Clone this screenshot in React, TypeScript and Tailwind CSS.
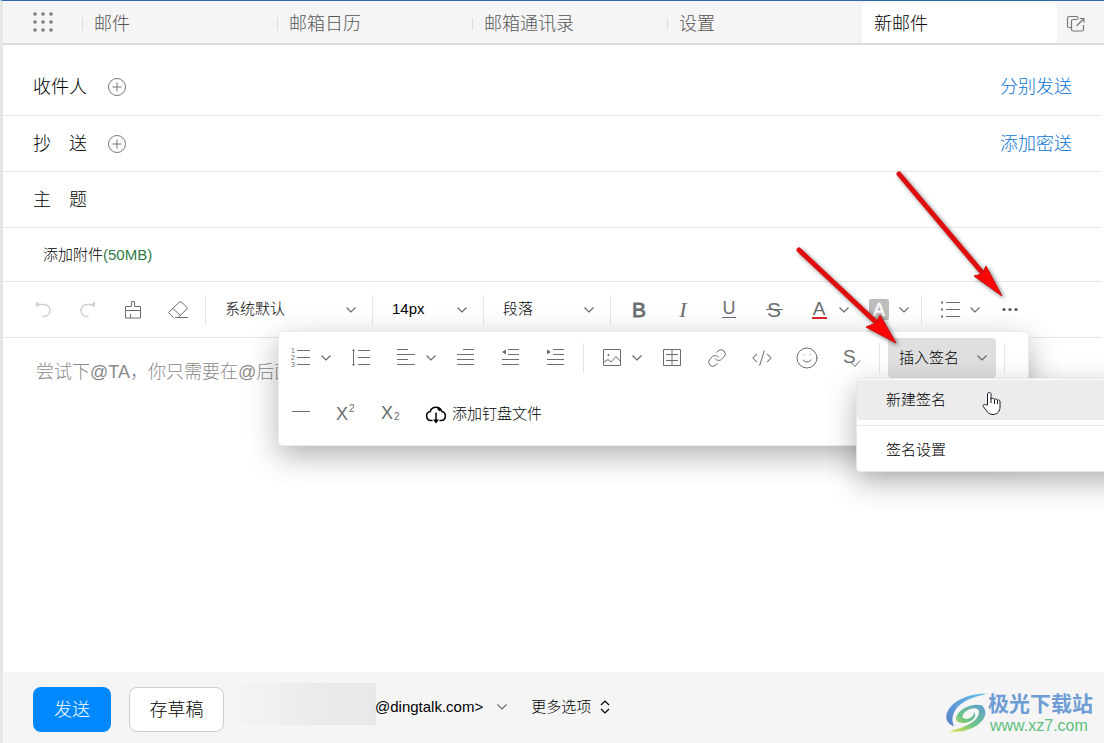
import { ReactNode, useState } from 'react'
import clsx from 'clsx'
import { CodeXml, Link, Smile } from 'lucide-react'

const tabs = ['邮件', '邮箱日历', '邮箱通讯录', '设置', '新邮件']

const Icon = ({
    children,
    className,
}: {
    children: ReactNode
    className?: string
}) => (
    <svg
        width="24"
        height="24"
        viewBox="0 0 24 24"
        fill="none"
        stroke="currentColor"
        aria-hidden="true"
        className={clsx('shrink-0', className)}
    >
        {children}
    </svg>
)

const Chevron = ({ className }: { className?: string }) => (
    <svg
        width="10"
        height="6"
        viewBox="0 0 10 6"
        fill="none"
        stroke="currentColor"
        aria-hidden="true"
        className={clsx('shrink-0 text-[#666]', className)}
    >
        <path d="M.5.5 5 5 9.5.5" strokeWidth="1.100" />
    </svg>
)

const ToolButton = ({
    label,
    dropdown,
    className,
    children,
}: {
    label: string
    dropdown?: boolean
    className?: string
    children: ReactNode
}) => (
    <button
        type="button"
        aria-label={label}
        className={clsx(
            'flex h-10 shrink-0 items-center gap-2',
            dropdown ? 'w-[60px]' : 'w-[45px]',
            className || 'pl-[11px] text-[#6b6e70]'
        )}
    >
        {children}
        {dropdown && <Chevron />}
    </button>
)

const Separator = () => (
    <span className="mx-[5px] h-[30px] w-px shrink-0 bg-[#e6e6e6]" />
)

const ToolSelect = ({
    label,
    value,
    className,
}: {
    label: string
    value: string
    className: string
}) => (
    <div className={clsx('relative h-10 shrink-0', className)}>
        <select
            aria-label={label}
            className="h-full w-full appearance-none bg-transparent pl-[14px] text-[15px] font-light text-black outline-none"
        >
            <option>{value}</option>
        </select>
        <Chevron className="pointer-events-none absolute right-[11px] top-[17px]" />
    </div>
)

const AddButton = ({ label }: { label: string }) => (
    <button type="button" aria-label={label} className="text-[#777]">
        <svg
            width="18"
            height="18"
            viewBox="0 0 18 18"
            fill="none"
            stroke="currentColor"
        >
            <circle cx="9" cy="9" r="8.5" />
            <path d="M9 4.5v9M4.5 9h9" />
        </svg>
    </button>
)

const Field = ({
    id,
    label,
    addLabel,
    action,
    className,
}: {
    id: string
    label: string
    addLabel?: string
    action?: string
    className: string
}) => (
    <div
        className={clsx(
            'mr-[3px] flex items-center border-b border-[#e5e5e5] pl-[30px] pr-[29px] text-lg font-light',
            className
        )}
    >
        <label htmlFor={id} className="mr-[21px] text-black">
            {label}
        </label>
        {addLabel && <AddButton label={addLabel} />}
        <input
            id={id}
            type="text"
            className="mx-3 min-w-0 flex-1 bg-transparent outline-none"
        />
        {action && (
            <a href="#" className="text-[#0a74d4]">
                {action}
            </a>
        )}
    </div>
)

const SignatureMenu = () => (
    <div
        role="menu"
        className="absolute left-[577px] top-[46px] w-[280px] rounded border border-[#e8e8e8] bg-white pt-px text-[15px] font-light text-black shadow-[0_10px_30px_rgba(0,0,0,0.3)]"
    >
        <button
            type="button"
            role="menuitem"
            className="block h-10 w-full rounded bg-[#ececec] pl-[29px] text-left"
        >
            新建签名
        </button>
        <div className="mt-[5px] h-px bg-[#e5e5e5]" />
        <button
            type="button"
            role="menuitem"
            className="block h-[45px] w-full pl-[29px] pt-1 text-left"
        >
            签名设置
        </button>
        <svg
            width="20"
            height="24"
            viewBox="0 0 20 24"
            fill="#fff"
            stroke="#1b1b2b"
            strokeLinejoin="round"
            aria-hidden="true"
            className="absolute left-[125px] top-[12px]"
        >
            <path d="M5.5 14V2.5a2 2 0 0 1 3.500 0V8c.5-1 3-1 3.500.5 1-1 2.800-.5 3 .8 1-.8 2.500-.2 2.500 1.200V16c0 4-2.500 7.500-7 7.500-3.500 0-5.500-1.700-7-4.500L1.300 15.500c-.8-1.600.9-2.800 2.200-1.700z" />
            <path d="M9 7v5M12.500 8.500V13M15.500 9.500V13" />
        </svg>
    </div>
)

const MorePanel = () => (
    <div className="absolute left-[275px] top-[49px] z-10 w-[751px] rounded border border-[#ececec] bg-white pb-[11px] pt-[6px] shadow-[0_10px_30px_rgba(0,0,0,0.3)]">
        <div className="-ml-px flex items-center">
            <ToolButton label="有序列表" dropdown>
                <Icon>
                    <path d="M8 4.500h13M8 11.500h13M8 18.500h13" />
                    <g
                        fill="currentColor"
                        stroke="none"
                        fontSize="7"
                        fontFamily="Liberation Sans"
                    >
                        <text x="2" y="7">
                            1
                        </text>
                        <text x="2" y="14">
                            2
                        </text>
                        <text x="2" y="21">
                            3
                        </text>
                    </g>
                </Icon>
            </ToolButton>
            <ToolButton label="行高">
                <Icon>
                    <path d="M4.500 3.500v16M3.500 5l1-1.500 1 1.500M3.500 18l1 1.500 1-1.500M9 4.500h12M9 11.500h12M9 18.500h12" />
                </Icon>
            </ToolButton>
            <ToolButton label="对齐" dropdown>
                <Icon>
                    <path d="M3 3.500h11M3 8.500h18M3 13.500h11M3 18.500h18" />
                </Icon>
            </ToolButton>
            <ToolButton label="首行缩进">
                <Icon>
                    <path d="M9 3.500h11M3 8.500h17M3 13.500h17M3 18.500h17" />
                </Icon>
            </ToolButton>
            <ToolButton label="减少缩进">
                <Icon>
                    <path d="M9 3.500h11M9 8.500h11M3 13.500h17M3 18.500h17" />
                    <path d="M7 3.500v5L3 6z" fill="currentColor" stroke="none" />
                </Icon>
            </ToolButton>
            <ToolButton label="增加缩进">
                <Icon>
                    <path d="M9 3.500h11M9 8.500h11M3 13.500h17M3 18.500h17" />
                    <path d="M3 3.500v5L7 6z" fill="currentColor" stroke="none" />
                </Icon>
            </ToolButton>
            <Separator />
            <ToolButton label="图片" dropdown>
                <Icon>
                    <path d="M3.500 3.500h17v16h-17z" />
                    <path d="m4 16 4-2.500 3 2.500 5-5.500 4.500 5" />
                    <circle cx="8.500" cy="9" r="1" fill="currentColor" stroke="none" />
                </Icon>
            </ToolButton>
            <ToolButton label="表格">
                <Icon>
                    <path d="M3.500 3.500h17v16h-17zM12 4v15M6 8.500h12M6 14.500h12" />
                </Icon>
            </ToolButton>
            <ToolButton label="链接" className="pl-[13px] text-[#6b6e70]">
                <Link size={20} strokeWidth={1.2} />
            </ToolButton>
            <ToolButton label="代码" className="pl-[12px] text-[#6b6e70]">
                <CodeXml size={22} strokeWidth={1.1} />
            </ToolButton>
            <ToolButton label="表情">
                <Smile size={24} strokeWidth={1} />
            </ToolButton>
            <ToolButton label="拼写检查">
                <Icon>
                    <text
                        x="3"
                        y="17"
                        fontSize="19"
                        fontFamily="Liberation Sans"
                        fill="currentColor"
                        stroke="none"
                    >
                        S
                    </text>
                    <path d="m11.500 17 3.500 3.500 5-6" />
                </Icon>
            </ToolButton>
            <Separator />
            <button
                type="button"
                aria-haspopup="menu"
                className="mx-[3px] flex h-10 w-[108px] items-center rounded-sm bg-[#dfdfdf] pl-[11px] text-[15px] font-light text-black"
            >
                插入签名
                <Chevron className="ml-[18px]" />
            </button>
            <Separator />
        </div>
        <div className="-ml-px mt-4 flex items-center">
            <ToolButton label="分割线">
                <Icon>
                    <path d="M3 9.500h18" />
                </Icon>
            </ToolButton>
            <ToolButton label="上标">
                <Icon>
                    <g
                        fill="currentColor"
                        stroke="none"
                        fontFamily="Liberation Sans"
                    >
                        <text x="2" y="18" fontSize="18">
                            X
                        </text>
                        <text x="15" y="10" fontSize="10">
                            2
                        </text>
                    </g>
                </Icon>
            </ToolButton>
            <ToolButton label="下标">
                <Icon>
                    <g
                        fill="currentColor"
                        stroke="none"
                        fontFamily="Liberation Sans"
                    >
                        <text x="2" y="17" fontSize="18">
                            X
                        </text>
                        <text x="15" y="18" fontSize="10">
                            2
                        </text>
                    </g>
                </Icon>
            </ToolButton>
            <button
                type="button"
                className="flex h-10 items-center gap-1 pl-[11px] text-[15px] font-light text-black"
            >
                <Icon>
                    <path
                        d="M8.500 18.500H7a4.500 4.500 0 0 1-.8-8.900 6 6 0 0 1 11.600 0 4.500 4.500 0 0 1-.8 8.900h-1.500M12 10.500v9.500M13.500 6.500a4.500 4.500 0 0 1 2.300 2.500"
                        strokeWidth="1.500"
                    />
                    <path d="M9 17.500h6L12 21.500z" fill="currentColor" stroke="none" />
                </Icon>
                添加钉盘文件
            </button>
        </div>
        <SignatureMenu />
    </div>
)

const Toolbar = () => (
    <div className="relative mr-[3px] flex h-14 items-center border-b border-[#e5e5e5] pl-[17px]">
        <ToolButton label="撤销" className="pl-[11px] text-[#d0d0d0]">
            <Icon>
                <path
                    d="M6 6.500h7a5.500 5.500 0 0 1 0 12H11.500"
                    strokeWidth="1.500"
                />
                <path d="M5 3.500v5.500L10 7z" fill="currentColor" stroke="none" />
            </Icon>
        </ToolButton>
        <ToolButton label="重做" className="pl-[11px] text-[#d0d0d0]">
            <Icon>
                <path
                    d="M18 6.500h-7a5.500 5.500 0 0 0 0 12H12.500"
                    strokeWidth="1.500"
                />
                <path d="M19 3.500v5.500L14 7z" fill="currentColor" stroke="none" />
            </Icon>
        </ToolButton>
        <ToolButton label="格式刷">
            <Icon>
                <path d="M10.500 8.500v-5h3v5h6v4h-15v-4zM4.500 12.500v7.500h15v-7.500M9.500 20v-4" />
            </Icon>
        </ToolButton>
        <ToolButton label="清除格式">
            <Icon>
                <path d="M9 19.500h13M7.500 19.500 2.500 14.500l11-10.500h2l5.500 5.500v1.500l-9 8.500M7 10.500l7.500 7" />
            </Icon>
        </ToolButton>
        <Separator />
        <ToolSelect label="字体" value="系统默认" className="w-[156px]" />
        <Separator />
        <ToolSelect label="字号" value="14px" className="w-[100px]" />
        <Separator />
        <ToolSelect label="段落格式" value="段落" className="w-[116px]" />
        <Separator />
        <ToolButton label="加粗">
            <Icon>
                <text
                    x="12"
                    y="19"
                    textAnchor="middle"
                    fontSize="21"
                    fontFamily="Liberation Sans"
                    fill="currentColor"
                    strokeWidth=".8"
                >
                    B
                </text>
            </Icon>
        </ToolButton>
        <ToolButton label="斜体">
            <Icon>
                <text
                    x="11"
                    y="19"
                    textAnchor="middle"
                    fontSize="22"
                    fontStyle="italic"
                    fontFamily="Liberation Serif"
                    fill="currentColor"
                    stroke="none"
                >
                    I
                </text>
            </Icon>
        </ToolButton>
        <ToolButton label="下划线">
            <Icon>
                <text
                    x="12"
                    y="16"
                    textAnchor="middle"
                    fontSize="18"
                    fontFamily="Liberation Sans"
                    fill="currentColor"
                    stroke="none"
                >
                    U
                </text>
                <path d="M5 19.500h14" />
            </Icon>
        </ToolButton>
        <ToolButton label="删除线">
            <Icon>
                <text
                    x="12"
                    y="19"
                    textAnchor="middle"
                    fontSize="21"
                    fontFamily="Liberation Sans"
                    fill="currentColor"
                    stroke="none"
                >
                    S
                </text>
                <path d="M4 11.500h17" />
            </Icon>
        </ToolButton>
        <ToolButton label="文字颜色" dropdown>
            <Icon>
                <text
                    x="12"
                    y="17"
                    textAnchor="middle"
                    fontSize="19"
                    fontFamily="Liberation Sans"
                    fill="currentColor"
                    stroke="none"
                >
                    A
                </text>
                <path d="M5 20h15" stroke="#d9252b" strokeWidth="2" />
            </Icon>
        </ToolButton>
        <ToolButton label="背景颜色" dropdown>
            <Icon>
                <rect
                    x="2"
                    y="1"
                    width="20"
                    height="21"
                    rx="2"
                    fill="#bdbdbd"
                    stroke="none"
                />
                <text
                    x="12"
                    y="18"
                    textAnchor="middle"
                    fontSize="18"
                    fontFamily="Liberation Sans"
                    fill="#fff"
                    stroke="#fff"
                    strokeWidth=".4"
                >
                    A
                </text>
            </Icon>
        </ToolButton>
        <Separator />
        <ToolButton label="无序列表" dropdown>
            <Icon>
                <path d="M8 4.500h14M8 11.500h14M8 18.500h14" />
                <path d="M3 4.500h2M3 11.500h2M3 18.500h2" strokeWidth="2" />
            </Icon>
        </ToolButton>
        <ToolButton label="更多">
            <Icon>
                <g fill="#555" stroke="none">
                    <circle cx="6" cy="11.500" r="1.600" />
                    <circle cx="12" cy="11.500" r="1.600" />
                    <circle cx="18" cy="11.500" r="1.600" />
                </g>
            </Icon>
        </ToolButton>
        <MorePanel />
    </div>
)

const Header = () => {
    const [active, setActive] = useState('新邮件')

    return (
        <header className="flex h-11 items-stretch border-b-2 border-[#dcdcdc] bg-[#f5f5f5]">
            <button
                type="button"
                aria-label="应用"
                className="w-[79px] shrink-0 pl-[30px] text-[#777]"
            >
                <svg width="20" height="20" viewBox="0 0 20 20" fill="currentColor">
                    {[2, 10, 18].map((y) =>
                        [2, 10, 18].map((x) => (
                            <rect
                                key={`${x}-${y}`}
                                x={x - 1.5}
                                y={y - 1.5}
                                width="3"
                                height="3"
                                rx=".5"
                            />
                        ))
                    )}
                </svg>
            </button>
            <nav className="flex min-w-0 flex-1">
                {tabs.map((tab) => (
                    <button
                        key={tab}
                        type="button"
                        onClick={() => setActive(tab)}
                        className={clsx(
                            'flex flex-1 items-center gap-[11px] pt-[3px] text-lg font-light',
                            tab === active
                                ? 'rounded-t-md bg-white text-black'
                                : 'text-[#555]'
                        )}
                    >
                        <span
                            className={clsx(
                                'h-3 w-px',
                                tab === active ? 'bg-transparent' : 'bg-[#dcdcdc]'
                            )}
                        />
                        {tab}
                    </button>
                ))}
            </nav>
            <button
                type="button"
                aria-label="新窗口打开"
                className="w-[47px] shrink-0 pl-2 pt-1 text-[#777]"
            >
                <svg
                    width="22"
                    height="20"
                    viewBox="0 0 22 20"
                    fill="none"
                    stroke="currentColor"
                    strokeWidth="1.200"
                    strokeLinejoin="round"
                >
                    <path d="M6.500 13.500H4A1.500 1.500 0 0 1 2.500 12V4A1.500 1.500 0 0 1 4 2.500h7.500A1.500 1.500 0 0 1 13 4v1.500" />
                    <path d="M12 5.500H8A1.500 1.500 0 0 0 6.500 7v8.500A1.500 1.500 0 0 0 8 17h9a1.500 1.500 0 0 0 1.500-1.500V11M11.500 12 19 4.500M15 4.500h4V8.500" />
                </svg>
            </button>
        </header>
    )
}

const Watermark = () => (
    <div className="ml-auto mr-[11px] mt-[9px] flex shrink-0">
        <svg width="43" height="42" viewBox="0 0 44 44" aria-hidden="true">
            <defs>
                <linearGradient id="swirl-blue" x1="0" y1="1" x2="1" y2="0">
                    <stop offset="0" stopColor="#5b7fc9" />
                    <stop offset="1" stopColor="#63c3ea" />
                </linearGradient>
                <linearGradient id="swirl-green" x1="0" y1="1" x2="1" y2="0">
                    <stop offset="0" stopColor="#f3e14f" />
                    <stop offset=".45" stopColor="#6cc684" />
                    <stop offset="1" stopColor="#5f9ed6" />
                </linearGradient>
            </defs>
            <path
                d="M43 2C25 1 4 10 1 24c-1 5 2 10 8 12-4-8-1-19 11-26C28 5 36 4 43 2Z"
                fill="url(#swirl-blue)"
            />
            <path
                d="M38 14C28 11 13 18 11 27c-1 6 9 7 16 3 4-2 5-6 3-9 0 6-8 9-12 6-1-5 6-10 13-10 5 1 5 5 2 10-5 7-17 11-29 14 14 3 32-4 37-15 2-5 0-9-3-12Z"
                fill="url(#swirl-green)"
            />
        </svg>
        <div className="flex flex-col whitespace-nowrap">
            <span className="text-[21px] font-bold leading-6 text-[#6d9dd4]">
                极光下载站
            </span>
            <span className="pl-[2px] text-base font-medium leading-5 text-[#5fbf7e]">
                www.xz7.com
            </span>
        </div>
    </div>
)

const Footer = () => (
    <footer className="flex h-[71px] items-start bg-[#f5f5f5] pl-[30px] pt-[11px]">
        <button
            type="submit"
            className="mt-1 h-[45px] w-[78px] shrink-0 rounded-lg bg-[#0089ff] text-lg font-light text-white"
        >
            发送
        </button>
        <button
            type="button"
            className="ml-[18px] mt-1 h-[45px] w-[95px] shrink-0 rounded-lg border border-[#ccc] bg-white text-lg font-light text-black"
        >
            存草稿
        </button>
        <div className="ml-2 flex h-12 shrink-0 items-center text-[15px] font-light text-black">
            <span className="h-[42px] w-36 self-start bg-linear-to-r from-[#f5f5f5] via-[#ececec] to-[#e9e7e8]" />
            <button type="button" className="-ml-px flex items-center gap-[14px]">
                @dingtalk.com&gt;
                <Chevron />
            </button>
            <button type="button" className="ml-6 flex items-center gap-[9px]">
                更多选项
                <svg
                    width="10"
                    height="14"
                    viewBox="0 0 10 14"
                    fill="none"
                    stroke="currentColor"
                    strokeWidth="1.200"
                >
                    <path d="M1 5l4-4 4 4M1 9l4 4 4-4" />
                </svg>
            </button>
        </div>
        <Watermark />
    </footer>
)

// Red pointers to the "more" button and the signature button
const Arrows = () => (
    <svg
        width="240"
        height="200"
        viewBox="0 0 240 200"
        aria-hidden="true"
        className="pointer-events-none absolute left-[777px] top-[159px] z-20 drop-shadow-[2px_2px_2px_rgba(0,0,0,0.5)]"
    >
        <g stroke="#df0d0d" strokeWidth="5" strokeLinecap="round">
            <path d="M119 14 205 116" />
            <path d="M19 90 101 167" />
        </g>
        <g fill="#fa0606" stroke="#d00b0b">
            <path d="M222 136 194 116 202 114 206 106Z" />
            <path d="M116 183 86 167 96 163 100 155Z" />
        </g>
    </svg>
)

const App = () => (
    <div className="relative flex min-h-screen flex-col overflow-hidden border-l-[3px] border-t border-l-[#e6e6e6] border-t-[#2c69b0] bg-white font-['Liberation_Sans','Noto_Sans_CJK_SC',sans-serif]">
        <Header />
        <form
            className="flex flex-1 flex-col"
            onSubmit={(e) => e.preventDefault()}
        >
            <Field
                id="to"
                label="收件人"
                addLabel="添加收件人"
                action="分别发送"
                className="h-[71px] pt-[14px]"
            />
            <Field
                id="cc"
                label="抄　送"
                addLabel="添加抄送人"
                action="添加密送"
                className="h-14"
            />
            <Field id="subject" label="主　题" className="h-14" />
            <div className="mr-[3px] flex h-[54px] items-center border-b border-[#e5e5e5] pl-10 pt-[2px] text-[15px] font-light">
                <button type="button" className="text-black">
                    添加附件<span className="text-[#2f7a45]">(50MB)</span>
                </button>
            </div>
            <Toolbar />
            <textarea
                aria-label="正文"
                placeholder="尝试下@TA，你只需要在@后面"
                className="min-h-[334px] flex-1 resize-none px-[33px] pt-5 text-lg font-light outline-none placeholder:text-[#8a8a8a]"
            />
            <Footer />
        </form>
        <Arrows />
    </div>
)

export default App
